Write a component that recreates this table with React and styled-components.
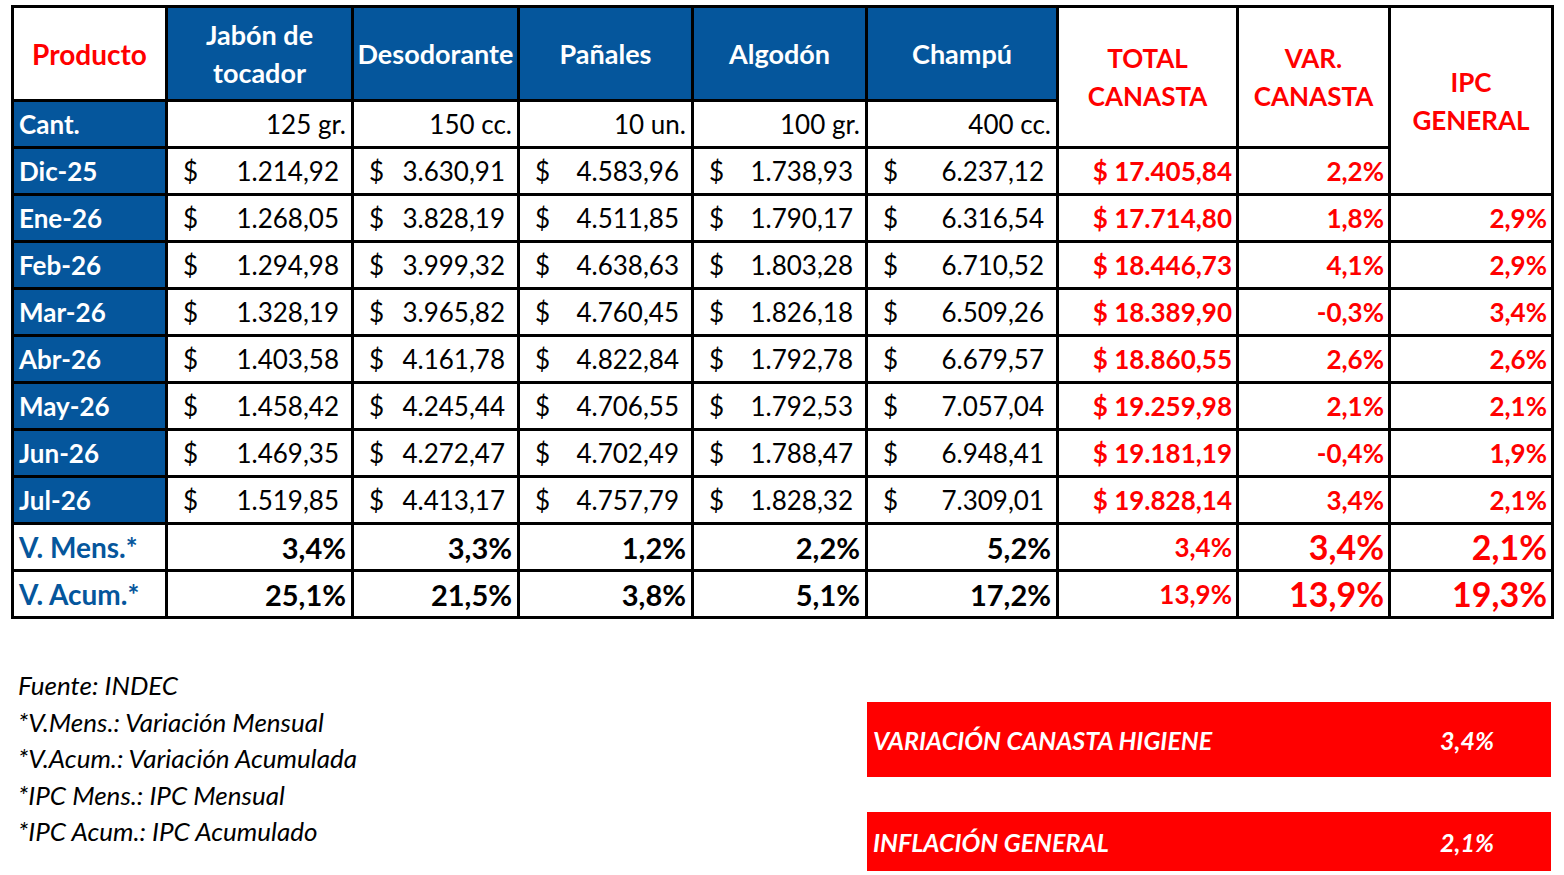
import React from 'react';
import styled, { createGlobalStyle } from 'styled-components';

const GlobalStyle = createGlobalStyle`
  body {
    margin: 0;
    background: #fff;
    font-family: Lato, "Liberation Sans", sans-serif;
  }
`;

const BLUE = '#05569c';
const RED = '#ff0000';

const Page = styled.div`
  padding: 5px 0 0 11px;
  width: 1540px;
`;

const Table = styled.table`
  border-collapse: collapse;
  table-layout: fixed;
  width: 1540px;
`;

const Col = styled.col`
  width: ${p => p.$w}px;
`;

const Cell = styled.td`
  border: 3px solid #000;
  padding: 0;
  height: ${p => p.$h || 44}px;
  line-height: 1;
  white-space: nowrap;
`;

const HeadCell = styled(Cell).attrs({ as: 'th' })`
  background: ${p => (p.$tone === 'blue' ? BLUE : '#fff')};
  color: ${p => (p.$tone === 'blue' ? '#fff' : RED)};
  font-size: ${p => p.$size || 26}px;
  font-weight: 700;
  line-height: 38px;
  text-align: center;
  white-space: normal;
`;

const LabelCell = styled(Cell)`
  background: ${p => (p.$plain ? '#fff' : BLUE)};
  color: ${p => (p.$plain ? BLUE : '#fff')};
  font-size: ${p => (p.$plain ? 28 : 26)}px;
  font-weight: 700;
  padding-left: 5px;
`;

const QtyCell = styled(Cell)`
  font-size: 26px;
  text-align: right;
  padding-right: 5px;
  color: #000;
`;

const MoneyCell = styled(Cell)`
  font-size: 26px;
  color: #000;
  padding: 0 12px 0 15px;
`;

const Money = styled.div`
  display: flex;
  justify-content: space-between;
  align-items: center;
`;

const ValueCell = styled(Cell)`
  text-align: right;
  font-weight: 700;
  font-size: ${p => p.$size || 26}px;
  color: ${p => (p.$black ? '#000' : RED)};
  padding-right: ${p => p.$pad ?? 4}px;
`;

const Footer = styled.div`
  display: flex;
  justify-content: space-between;
  align-items: flex-start;
`;

const Notes = styled.div`
  margin-top: 48px;
  padding-left: 7px;
  font-style: italic;
  font-size: 26px;
  line-height: 36.5px;
  color: #000;
`;

const Boxes = styled.div`
  display: flex;
  flex-direction: column;
  gap: 35px;
  margin-top: 83px;
  width: 684px;
`;

const Box = styled.div`
  display: flex;
  align-items: center;
  height: ${p => p.$h}px;
  background: ${RED};
  color: #fff;
  font-style: italic;
  font-weight: 700;
  font-size: 25px;
  padding-left: 6px;
`;

const BoxLabel = styled.span`
  flex: 0 0 567px;
`;

const widths = [154, 186, 166, 174, 174, 191, 180, 152, 163];

const products = [
  ['Jabón de', 'tocador'],
  ['Desodorante'],
  ['Pañales'],
  ['Algodón'],
  ['Champú'],
];

const qty = ['125 gr.', '150 cc.', '10 un.', '100 gr.', '400 cc.'];

const months = [
  ['Dic-25', ['1.214,92', '3.630,91', '4.583,96', '1.738,93', '6.237,12'], '$ 17.405,84', '2,2%', null],
  ['Ene-26', ['1.268,05', '3.828,19', '4.511,85', '1.790,17', '6.316,54'], '$ 17.714,80', '1,8%', '2,9%'],
  ['Feb-26', ['1.294,98', '3.999,32', '4.638,63', '1.803,28', '6.710,52'], '$ 18.446,73', '4,1%', '2,9%'],
  ['Mar-26', ['1.328,19', '3.965,82', '4.760,45', '1.826,18', '6.509,26'], '$ 18.389,90', '-0,3%', '3,4%'],
  ['Abr-26', ['1.403,58', '4.161,78', '4.822,84', '1.792,78', '6.679,57'], '$ 18.860,55', '2,6%', '2,6%'],
  ['May-26', ['1.458,42', '4.245,44', '4.706,55', '1.792,53', '7.057,04'], '$ 19.259,98', '2,1%', '2,1%'],
  ['Jun-26', ['1.469,35', '4.272,47', '4.702,49', '1.788,47', '6.948,41'], '$ 19.181,19', '-0,4%', '1,9%'],
  ['Jul-26', ['1.519,85', '4.413,17', '4.757,79', '1.828,32', '7.309,01'], '$ 19.828,14', '3,4%', '2,1%'],
];

const summary = [
  ['V. Mens.*', ['3,4%', '3,3%', '1,2%', '2,2%', '5,2%'], '3,4%', '3,4%', '2,1%'],
  ['V. Acum.*', ['25,1%', '21,5%', '3,8%', '5,1%', '17,2%'], '13,9%', '13,9%', '19,3%'],
];

const notes = [
  'Fuente: INDEC',
  '*V.Mens.: Variación Mensual',
  '*V.Acum.: Variación Acumulada',
  '*IPC Mens.: IPC Mensual',
  '*IPC Acum.: IPC Acumulado',
];

export default function App() {
  return (
    <Page>
      <GlobalStyle />
      <Table>
        <colgroup>
          {widths.map((w, i) => <Col key={i} $w={w} />)}
        </colgroup>
        <tbody>
          <tr>
            <HeadCell $h={91} $size={28}>Producto</HeadCell>
            {products.map((p, i) => (
              <HeadCell key={i} $tone="blue" $size={27}>
                {p.map((l, j) => <div key={j}>{l}</div>)}
              </HeadCell>
            ))}
            <HeadCell rowSpan={2}><div>TOTAL</div><div>CANASTA</div></HeadCell>
            <HeadCell rowSpan={2}><div>VAR.</div><div>CANASTA</div></HeadCell>
            <HeadCell rowSpan={3}><div>IPC</div><div>GENERAL</div></HeadCell>
          </tr>
          <tr>
            <LabelCell>Cant.</LabelCell>
            {qty.map((q, i) => <QtyCell key={i}>{q}</QtyCell>)}
          </tr>
          {months.map(([m, vals, total, v, ipc]) => (
            <tr key={m}>
              <LabelCell>{m}</LabelCell>
              {vals.map((n, i) => (
                <MoneyCell key={i}>
                  <Money><span>$</span><span>{n}</span></Money>
                </MoneyCell>
              ))}
              <ValueCell>{total}</ValueCell>
              <ValueCell>{v}</ValueCell>
              {ipc && <ValueCell>{ipc}</ValueCell>}
            </tr>
          ))}
          {summary.map(([label, vals, total, v, ipc]) => (
            <tr key={label}>
              <LabelCell $plain>{label}</LabelCell>
              {vals.map((n, i) => (
                <ValueCell key={i} $black $size={29} $pad={5}>{n}</ValueCell>
              ))}
              <ValueCell $size={26}>{total}</ValueCell>
              <ValueCell $size={34}>{v}</ValueCell>
              <ValueCell $size={34}>{ipc}</ValueCell>
            </tr>
          ))}
        </tbody>
      </Table>
      <Footer>
        <Notes>
          {notes.map(n => <div key={n}>{n}</div>)}
        </Notes>
        <Boxes>
          <Box $h={75}><BoxLabel>VARIACIÓN CANASTA HIGIENE</BoxLabel>3,4%</Box>
          <Box $h={59}><BoxLabel>INFLACIÓN GENERAL</BoxLabel>2,1%</Box>
        </Boxes>
      </Footer>
    </Page>
  );
}
